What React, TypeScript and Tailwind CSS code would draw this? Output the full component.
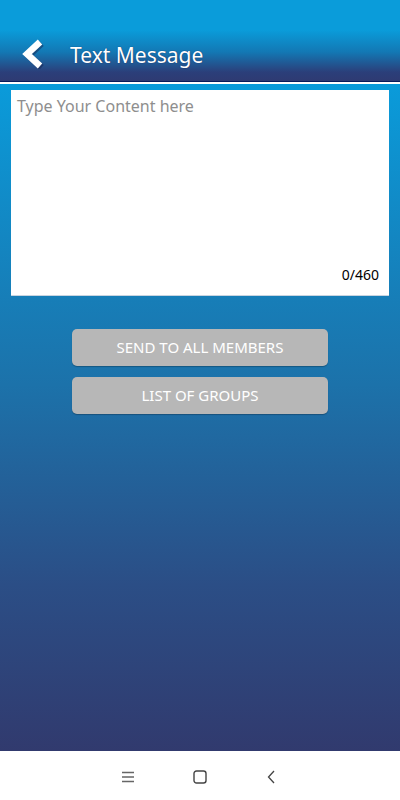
export default function App() {
  return (
    <div
      className="w-[400px] h-[800px] flex flex-col overflow-hidden"
      style={{ fontFamily: '"Noto Sans", "Open Sans", sans-serif' }}
    >
      {/* Header */}
      <div className="h-[81px] shrink-0 bg-[linear-gradient(to_bottom,#0a9cda_0px,#0a9cda_30px,#1378b4_52px,#2b3f7a_72px,#2e3a72_81px)] flex items-end pb-[11px]">
        <svg width="30" height="30" viewBox="0 0 30 30" className="ml-[17px] mb-[1px]">
          <path d="M23 3 L10 15 L23 27" stroke="#1a2450" strokeWidth="6.5" fill="none" strokeLinejoin="miter" transform="translate(1.5 1.5)" opacity="0.5" />
          <path d="M23 3 L10 15 L23 27" stroke="#ffffff" strokeWidth="6.5" fill="none" strokeLinejoin="miter" />
        </svg>
        <span className="ml-[23px] text-white text-[21px] leading-[30px] [text-shadow:0_0_1px_rgba(10,20,80,0.8)]">Text Message</span>
      </div>
      <div className="h-[1px] bg-[#0b1a5a] shrink-0" />
      <div className="h-[2px] bg-white shrink-0" />

      {/* Body */}
      <div className="flex-1 bg-[linear-gradient(to_bottom,#0a9bda,#1c72aa_45%,#2b4e86_75%,#313a6e)] flex flex-col items-center pt-[6px]">
        <div className="w-[378px] h-[206px] bg-white flex flex-col justify-between px-[6px] pt-[5px] pb-[10px] border-b border-[#c8d4e0]">
          <span className="text-[16px] text-[#8e8e8e] leading-[22px]">Type Your Content here</span>
          <span className="self-end text-[14px] text-black leading-[20px] pr-[4px]">0/460</span>
        </div>
        <button className="mt-[33px] w-[256px] h-[37px] rounded-[5px] bg-[#b7b7b7] text-white text-[15px] shadow-[0_1px_1px_rgba(0,0,0,0.25)]">
          SEND TO ALL MEMBERS
        </button>
        <button className="mt-[11px] w-[256px] h-[37px] rounded-[5px] bg-[#b7b7b7] text-white text-[15px] shadow-[0_1px_1px_rgba(0,0,0,0.25)]">
          LIST OF GROUPS
        </button>
      </div>

      {/* Navigation bar */}
      <div className="h-[49px] shrink-0 bg-white flex items-center justify-center gap-[58px] pt-[2px]">
        <svg width="14" height="12" viewBox="0 0 14 12">
          <path d="M1 1.5 H13 M1 6 H13 M1 10.5 H13" stroke="#666" strokeWidth="1.3" />
        </svg>
        <svg width="14" height="14" viewBox="0 0 14 14">
          <rect x="1" y="1" width="12" height="12" rx="2.5" stroke="#444" strokeWidth="1.4" fill="none" />
        </svg>
        <svg width="14" height="14" viewBox="0 0 14 14">
          <path d="M9 1 L3.5 7 L9 13" stroke="#444" strokeWidth="1.3" fill="none" />
        </svg>
      </div>
    </div>
  );
}
